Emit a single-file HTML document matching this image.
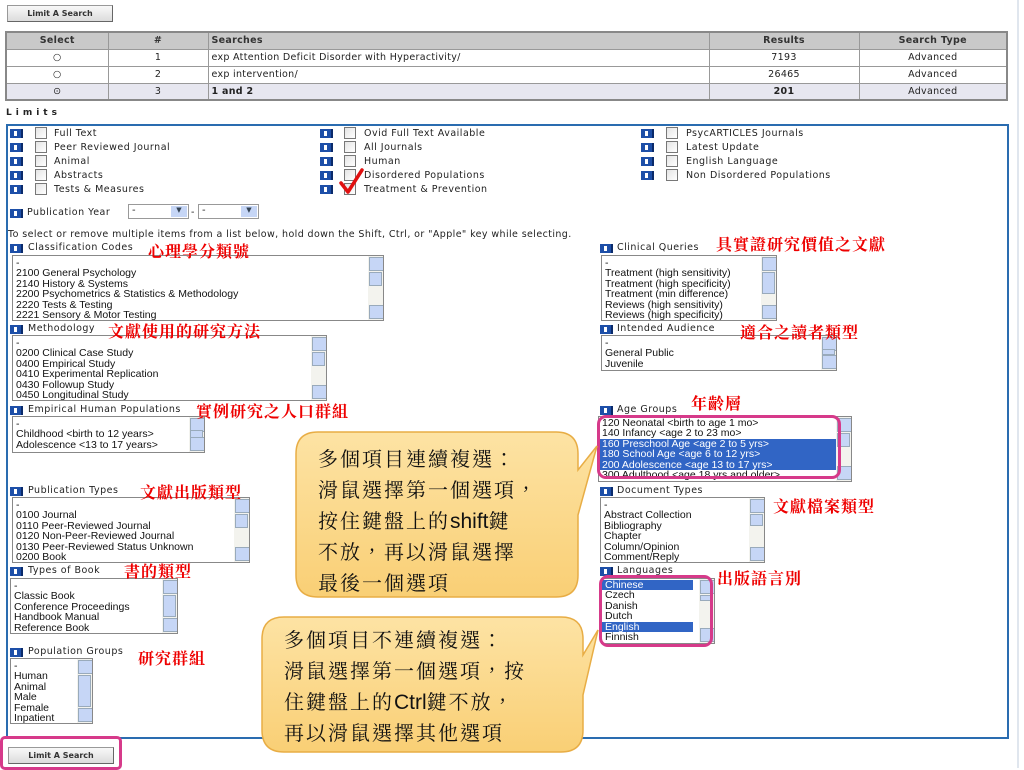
<!DOCTYPE html>
<html><head><meta charset="utf-8">
<style>
*{margin:0;padding:0;box-sizing:border-box}
body{width:1024px;height:768px;position:relative;background:#fff;overflow:hidden;font-family:"DejaVu Sans","Liberation Sans",sans-serif;font-size:9px;color:#222}
.a{position:absolute;white-space:nowrap}
.btn{position:absolute;height:17px;width:106px;border:1px solid #999;border-right-color:#666;border-bottom-color:#666;background:linear-gradient(#f8f8f8,#dcdcdc);font-size:8px;text-align:center;line-height:15px;font-weight:bold;color:#333}
table{position:absolute;left:5px;top:31px;width:1003px;border-collapse:collapse;border:2px solid #888}
td{border:1px solid #999;height:17px;font-size:9.5px;letter-spacing:.3px;text-align:center}
tr.h td{background:#c9c9c9;font-weight:bold;color:#333}
tr.s td{background:#e7e7f0}
.ic{position:absolute;width:13px;height:9px;background:#1d4fa8;border-right:2px solid #0a2a6a}
.ic:after{content:"";position:absolute;left:4px;top:2px;width:3px;height:5px;background:#fff}
.cb{position:absolute;width:12px;height:12px;border:1px solid #777;background:linear-gradient(135deg,#e4e4e4,#fff)}
.lt{position:absolute;font-size:9.5px;letter-spacing:.5px;white-space:nowrap;color:#222}
.lb{position:absolute;border:1px solid #888;background:#fff;font-family:"Liberation Sans",sans-serif;font-size:10.5px;line-height:10.4px;padding:2px 3px;overflow:hidden;color:#111}
.lb .sb{position:absolute;right:0;top:0;bottom:0;width:15px;background:#f3f3ee}
.lb .sb:before,.lb .sb:after{content:"";position:absolute;left:1px;width:13px;height:12px;background:#c6d6f6;border:1px solid #9ab}
.lb .sb:before{top:1px}.lb .sb:after{bottom:1px}
.lb .th{position:absolute;right:1px;top:16px;width:13px;height:14px;background:#c6d6f6;border:1px solid #9ab}
.sel{background:#3165c5;color:#fff;margin:0 -3px;padding:0 3px}
.red{position:absolute;color:#e00;font-family:"Noto Serif CJK SC","WenQuanYi Zen Hei",serif;font-weight:bold;font-size:16px;white-space:nowrap;letter-spacing:1px}
.pink{position:absolute;border:3px solid #d63a8a;border-radius:9px}
.co{position:absolute;font-family:"Noto Serif CJK TC","Noto Serif CJK SC",serif;font-size:20px;color:#111;letter-spacing:2px;white-space:nowrap}
.co div{height:31px;line-height:31px}
.co b{font-family:"Liberation Sans",sans-serif;font-weight:normal;letter-spacing:0;font-size:21px;line-height:20px;vertical-align:baseline}
</style></head><body>

<div class="btn" style="left:7px;top:5px">Limit A Search</div>

<table>
<tr class="h"><td style="width:102px">Select</td><td style="width:100px">#</td><td style="width:501px;text-align:left;padding-left:3px">Searches</td><td style="width:150px">Results</td><td>Search Type</td></tr>
<tr><td>○</td><td>1</td><td style="text-align:left;padding-left:3px">exp Attention Deficit Disorder with Hyperactivity/</td><td>7193</td><td>Advanced</td></tr>
<tr><td>○</td><td>2</td><td style="text-align:left;padding-left:3px">exp intervention/</td><td>26465</td><td>Advanced</td></tr>
<tr class="s"><td>⊙</td><td>3</td><td style="text-align:left;padding-left:3px;font-weight:bold">1 and 2</td><td style="font-weight:bold">201</td><td>Advanced</td></tr>
</table>

<div class="a" style="left:6px;top:108px;font-size:9px;font-weight:bold;letter-spacing:4px">Limits</div>

<div style="position:absolute;left:6px;top:124px;width:1003px;height:615px;border:2px solid #2a6cb0"></div>
<div style="position:absolute;left:1017px;top:0;width:2px;height:768px;background:#e0e6ee"></div>

<div class="ic" style="left:10px;top:129px"></div><div class="cb" style="left:35px;top:127px"></div><div class="lt" style="left:54px;top:128px">Full Text</div>
<div class="ic" style="left:10px;top:143px"></div><div class="cb" style="left:35px;top:141px"></div><div class="lt" style="left:54px;top:142px">Peer Reviewed Journal</div>
<div class="ic" style="left:10px;top:157px"></div><div class="cb" style="left:35px;top:155px"></div><div class="lt" style="left:54px;top:156px">Animal</div>
<div class="ic" style="left:10px;top:171px"></div><div class="cb" style="left:35px;top:169px"></div><div class="lt" style="left:54px;top:170px">Abstracts</div>
<div class="ic" style="left:10px;top:185px"></div><div class="cb" style="left:35px;top:183px"></div><div class="lt" style="left:54px;top:184px">Tests &amp; Measures</div>

<div class="ic" style="left:320px;top:129px"></div><div class="cb" style="left:344px;top:127px"></div><div class="lt" style="left:364px;top:128px">Ovid Full Text Available</div>
<div class="ic" style="left:320px;top:143px"></div><div class="cb" style="left:344px;top:141px"></div><div class="lt" style="left:364px;top:142px">All Journals</div>
<div class="ic" style="left:320px;top:157px"></div><div class="cb" style="left:344px;top:155px"></div><div class="lt" style="left:364px;top:156px">Human</div>
<div class="ic" style="left:320px;top:171px"></div><div class="cb" style="left:344px;top:169px"></div><div class="lt" style="left:364px;top:170px">Disordered Populations</div>
<div class="ic" style="left:320px;top:185px"></div><div class="cb" style="left:344px;top:183px"></div><div class="lt" style="left:364px;top:184px">Treatment &amp; Prevention</div>
<svg class="a" style="left:338px;top:168px" width="26" height="28"><path d="M3,15 L10,24 L24,2" fill="none" stroke="#e01010" stroke-width="3.5" stroke-linecap="round" stroke-linejoin="round"/></svg>

<div class="ic" style="left:641px;top:129px"></div><div class="cb" style="left:666px;top:127px"></div><div class="lt" style="left:686px;top:128px">PsycARTICLES Journals</div>
<div class="ic" style="left:641px;top:143px"></div><div class="cb" style="left:666px;top:141px"></div><div class="lt" style="left:686px;top:142px">Latest Update</div>
<div class="ic" style="left:641px;top:157px"></div><div class="cb" style="left:666px;top:155px"></div><div class="lt" style="left:686px;top:156px">English Language</div>
<div class="ic" style="left:641px;top:171px"></div><div class="cb" style="left:666px;top:169px"></div><div class="lt" style="left:686px;top:170px">Non Disordered Populations</div>

<div class="ic" style="left:10px;top:209px"></div><div class="lt" style="left:27px;top:207px">Publication Year</div>
<div class="a" style="left:128px;top:204px;width:61px;height:15px;border:1px solid #999;background:#fff;font-size:10px;padding-left:3px">-<span style="position:absolute;right:1px;top:1px;width:16px;height:11px;background:#c6d6f6;font-size:7px;text-align:center;color:#345">▼</span></div>
<div class="lt" style="left:191px;top:207px">-</div>
<div class="a" style="left:198px;top:204px;width:61px;height:15px;border:1px solid #999;background:#fff;font-size:10px;padding-left:3px">-<span style="position:absolute;right:1px;top:1px;width:16px;height:11px;background:#c6d6f6;font-size:7px;text-align:center;color:#345">▼</span></div>

<div class="lt" style="left:8px;top:229px;letter-spacing:.4px">To select or remove multiple items from a list below, hold down the Shift, Ctrl, or "Apple" key while selecting.</div>

<div class="ic" style="left:10px;top:244px"></div><div class="lt" style="left:28px;top:242px">Classification Codes</div>
<div class="lb" style="left:12px;top:255px;width:372px;height:66px">-<br>2100 General Psychology<br>2140 History &amp; Systems<br>2200 Psychometrics &amp; Statistics &amp; Methodology<br>2220 Tests &amp; Testing<br>2221 Sensory &amp; Motor Testing<div class="sb"></div><div class="th"></div></div>

<div class="ic" style="left:10px;top:325px"></div><div class="lt" style="left:28px;top:323px">Methodology</div>
<div class="lb" style="left:12px;top:335px;width:315px;height:66px">-<br>0200 Clinical Case Study<br>0400 Empirical Study<br>0410 Experimental Replication<br>0430 Followup Study<br>0450 Longitudinal Study<div class="sb"></div><div class="th"></div></div>

<div class="ic" style="left:10px;top:406px"></div><div class="lt" style="left:28px;top:404px">Empirical Human Populations</div>
<div class="lb" style="left:12px;top:416px;width:193px;height:37px">-<br>Childhood &lt;birth to 12 years&gt;<br>Adolescence &lt;13 to 17 years&gt;<div class="sb"></div><div class="th" style="height:8px;top:13px"></div></div>

<div class="ic" style="left:10px;top:487px"></div><div class="lt" style="left:28px;top:485px">Publication Types</div>
<div class="lb" style="left:12px;top:497px;width:238px;height:66px">-<br>0100 Journal<br>0110 Peer-Reviewed Journal<br>0120 Non-Peer-Reviewed Journal<br>0130 Peer-Reviewed Status Unknown<br>0200 Book<div class="sb"></div><div class="th"></div></div>

<div class="ic" style="left:10px;top:567px"></div><div class="lt" style="left:28px;top:565px">Types of Book</div>
<div class="lb" style="left:10px;top:578px;width:168px;height:56px">-<br>Classic Book<br>Conference Proceedings<br>Handbook Manual<br>Reference Book<div class="sb"></div><div class="th" style="height:22px"></div></div>

<div class="ic" style="left:10px;top:648px"></div><div class="lt" style="left:28px;top:646px">Population Groups</div>
<div class="lb" style="left:10px;top:658px;width:83px;height:66px">-<br>Human<br>Animal<br>Male<br>Female<br>Inpatient<div class="sb"></div><div class="th" style="height:32px"></div></div>

<div class="ic" style="left:600px;top:244px"></div><div class="lt" style="left:617px;top:242px">Clinical Queries</div>
<div class="lb" style="left:601px;top:255px;width:176px;height:66px">-<br>Treatment (high sensitivity)<br>Treatment (high specificity)<br>Treatment (min difference)<br>Reviews (high sensitivity)<br>Reviews (high specificity)<div class="sb"></div><div class="th" style="height:22px"></div></div>

<div class="ic" style="left:600px;top:325px"></div><div class="lt" style="left:617px;top:323px">Intended Audience</div>
<div class="lb" style="left:601px;top:335px;width:236px;height:36px">-<br>General Public<br>Juvenile<div class="sb"></div><div class="th" style="height:6px;top:13px"></div></div>

<div class="ic" style="left:600px;top:406px"></div><div class="lt" style="left:617px;top:404px">Age Groups</div>
<div class="lb" style="left:598px;top:416px;width:254px;height:66px;padding-top:1px">120 Neonatal &lt;birth to age 1 mo&gt;<br>140 Infancy &lt;age 2 to 23 mo&gt;<br><div class="sel">160 Preschool Age &lt;age 2 to 5 yrs&gt;<br>180 School Age &lt;age 6 to 12 yrs&gt;<br>200 Adolescence &lt;age 13 to 17 yrs&gt;</div>300 Adulthood &lt;age 18 yrs and older&gt;<div class="sb"></div><div class="th"></div></div>
<div class="pink" style="left:597px;top:415px;width:244px;height:64px"></div>

<div class="ic" style="left:600px;top:487px"></div><div class="lt" style="left:617px;top:485px">Document Types</div>
<div class="lb" style="left:600px;top:497px;width:165px;height:66px">-<br>Abstract Collection<br>Bibliography<br>Chapter<br>Column/Opinion<br>Comment/Reply<div class="sb"></div><div class="th" style="height:12px"></div></div>

<div class="ic" style="left:600px;top:567px"></div><div class="lt" style="left:617px;top:565px">Languages</div>
<div class="lb" style="left:601px;top:578px;width:114px;height:66px;padding-top:1px"><div class="sel" style="margin-right:18px">Chinese</div>Czech<br>Danish<br>Dutch<br><div class="sel" style="margin-right:18px">English</div>Finnish<div class="sb"></div><div class="th" style="height:6px"></div></div>
<div class="pink" style="left:599px;top:575px;width:114px;height:72px"></div>

<div class="red" style="left:148px;top:239px">心理學分類號</div>
<div class="red" style="left:108px;top:319px">文獻使用的研究方法</div>
<div class="red" style="left:196px;top:399px">實例研究之人口群組</div>
<div class="red" style="left:140px;top:480px">文獻出版類型</div>
<div class="red" style="left:124px;top:559px">書的類型</div>
<div class="red" style="left:138px;top:646px">研究群組</div>
<div class="red" style="left:716px;top:232px">具實證研究價值之文獻</div>
<div class="red" style="left:740px;top:320px">適合之讀者類型</div>
<div class="red" style="left:691px;top:391px">年齡層</div>
<div class="red" style="left:773px;top:494px">文獻檔案類型</div>
<div class="red" style="left:717px;top:566px">出版語言別</div>

<svg class="a" style="left:0;top:0" width="1024" height="768">
<defs><linearGradient id="g" x1="0" y1="0" x2="0" y2="1"><stop offset="0" stop-color="#fde3a4"/><stop offset="1" stop-color="#f9cf75"/></linearGradient></defs>
<path d="M318,432 H556 Q578,432 578,454 V470 L597,446 L578,515 V575 Q578,597 556,597 H318 Q296,597 296,575 V454 Q296,432 318,432 Z" fill="url(#g)" stroke="#e8ad45" stroke-width="1.5"/>
<path d="M284,617 H561 Q583,617 583,639 V655 L598,630 L583,695 V730 Q583,752 561,752 H284 Q262,752 262,730 V639 Q262,617 284,617 Z" fill="url(#g)" stroke="#e8ad45" stroke-width="1.5"/>
</svg>
<div class="co" style="left:318px;top:442px"><div>多個項目連續複選：</div><div>滑鼠選擇第一個選項，</div><div>按住鍵盤上的<b>shift</b>鍵</div><div>不放，再以滑鼠選擇</div><div>最後一個選項</div></div>
<div class="co" style="left:284px;top:623px"><div>多個項目不連續複選：</div><div>滑鼠選擇第一個選項，按</div><div>住鍵盤上的<b>Ctrl</b>鍵不放，</div><div>再以滑鼠選擇其他選項</div></div>

<div class="btn" style="left:8px;top:747px">Limit A Search</div>
<div class="pink" style="left:0;top:736px;width:122px;height:34px;border-radius:5px"></div>
</body></html>
